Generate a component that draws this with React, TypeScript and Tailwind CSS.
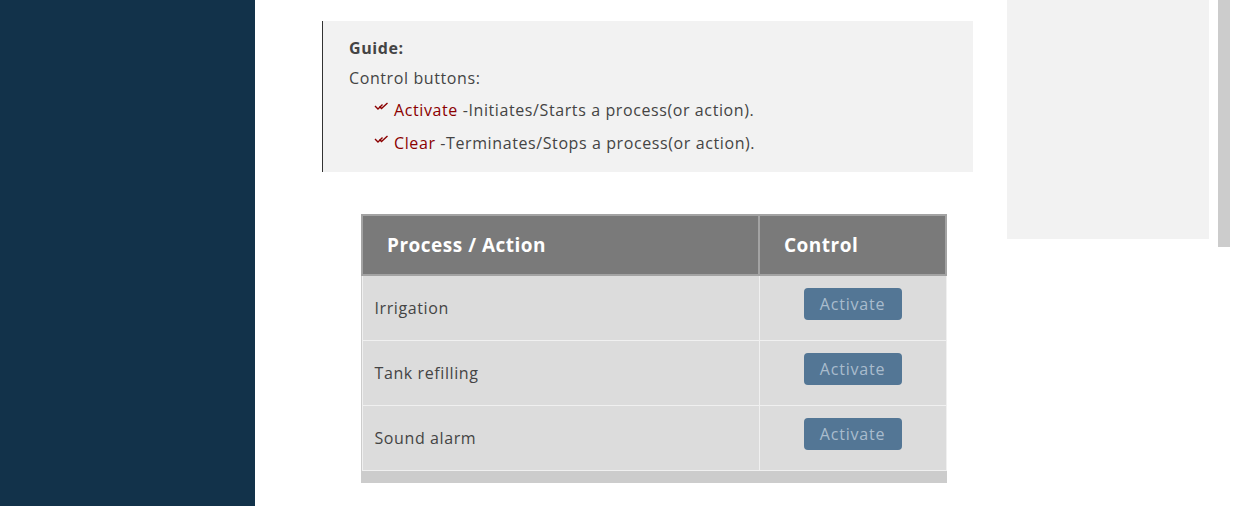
import React from 'react';

const font = { fontFamily: '"Open Sans", "Liberation Sans", sans-serif' };

const DoubleCheck = () => (
  <svg width="15" height="10" viewBox="0 0 15 10" className="mr-[5px] mt-[-7px] shrink-0">
    <path d="M1 4 L4 7 L8.5 2.5" fill="none" stroke="#8b0000" strokeWidth="1.4" />
    <path d="M5.5 4.5 L7.5 6.5 L13.5 1" fill="none" stroke="#8b0000" strokeWidth="1.4" />
  </svg>
);

const rows = ['Irrigation', 'Tank refilling', 'Sound alarm'];

export default function App() {
  return (
    <div className="flex h-[506px] w-[1238px] overflow-hidden bg-white text-[#444]" style={font}>
      <aside className="w-[255px] shrink-0 bg-[#12324a]" />

      <main className="w-[752px] shrink-0 pl-[67px] pt-[21px]">
        <div className="w-[651px] border-l border-[#333] bg-[#f2f2f2] pb-[18px] pl-[26px] pt-[16px] text-[16px] tracking-[0.6px]">
          <p className="font-bold leading-[22px]">Guide:</p>
          <p className="mt-[8px] leading-[22px]">Control buttons:</p>
          <ul className="mt-[10px] flex flex-col gap-[11px] pl-[25px]">
            <li className="flex items-center leading-[22px]">
              <DoubleCheck />
              <span className="text-[#8b0000]">Activate</span>
              <span>&nbsp;-Initiates/Starts a process(or action).</span>
            </li>
            <li className="flex items-center leading-[22px]">
              <DoubleCheck />
              <span className="text-[#8b0000]">Clear</span>
              <span>&nbsp;-Terminates/Stops a process(or action).</span>
            </li>
          </ul>
        </div>

        <div className="ml-[39px] mt-[42px] w-[586px] bg-[#cccccc] pb-[12px]">
          <table className="w-full border-collapse">
            <thead>
              <tr className="h-[60px] bg-[#7a7a7a] text-[19px] font-bold tracking-[0.5px] text-white">
                <th className="w-[397px] border-2 border-[#a3a3a3] pl-[24px] text-left">Process / Action</th>
                <th className="border-2 border-[#a3a3a3] pl-[24px] text-left">Control</th>
              </tr>
            </thead>
            <tbody>
              {rows.map((r) => (
                <tr key={r} className="h-[65px] bg-[#dcdcdc] text-[16px] tracking-[0.6px]">
                  <td className="border border-[#f0f0f0] pl-[12px]">{r}</td>
                  <td className="border border-[#f0f0f0] text-center">
                    <button className="mb-[7px] h-[32px] w-[98px] rounded-[4px] bg-[#537695] text-[16px] tracking-[0.8px] text-[#a9bccd]">
                      Activate
                    </button>
                  </td>
                </tr>
              ))}
            </tbody>
          </table>
        </div>
      </main>

      <div className="h-[239px] w-[202px] shrink-0 bg-[#f2f2f2]" />
      <div className="ml-[9px] h-[247px] w-[12px] shrink-0 bg-[#cccccc]" />
    </div>
  );
}
